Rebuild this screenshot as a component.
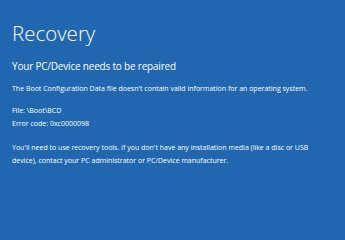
export default function App() {
  return (
    <div
      className="h-[240px] w-[345px] overflow-hidden bg-[#2067b0] pl-[12px] text-white"
      style={{ fontFamily: '"Open Sans", "Noto Sans", sans-serif' }}
    >
      <h1 className="pt-[21px] text-[20.5px] font-light leading-[24px]">Recovery</h1>
      <h2 className="mt-[14px] text-[10px] font-normal leading-[14px] tracking-[-0.2px]">
        Your PC/Device needs to be repaired
      </h2>
      <p className="mt-[10px] text-[7px] leading-[12px]">
        The Boot Configuration Data file doesn't contain valid information for an operating system.
      </p>
      <div className="mt-[10px] text-[7px] leading-[12.5px]">
        <p>File: \Boot\BCD</p>
        <p>Error code: 0xc0000098</p>
      </div>
      <p className="mt-[11px] w-[320px] text-[7px] leading-[13px]">
        You'll need to use recovery tools. If you don't have any installation media (like a disc or USB
        device), contact your PC administrator or PC/Device manufacturer.
      </p>
    </div>
  );
}
